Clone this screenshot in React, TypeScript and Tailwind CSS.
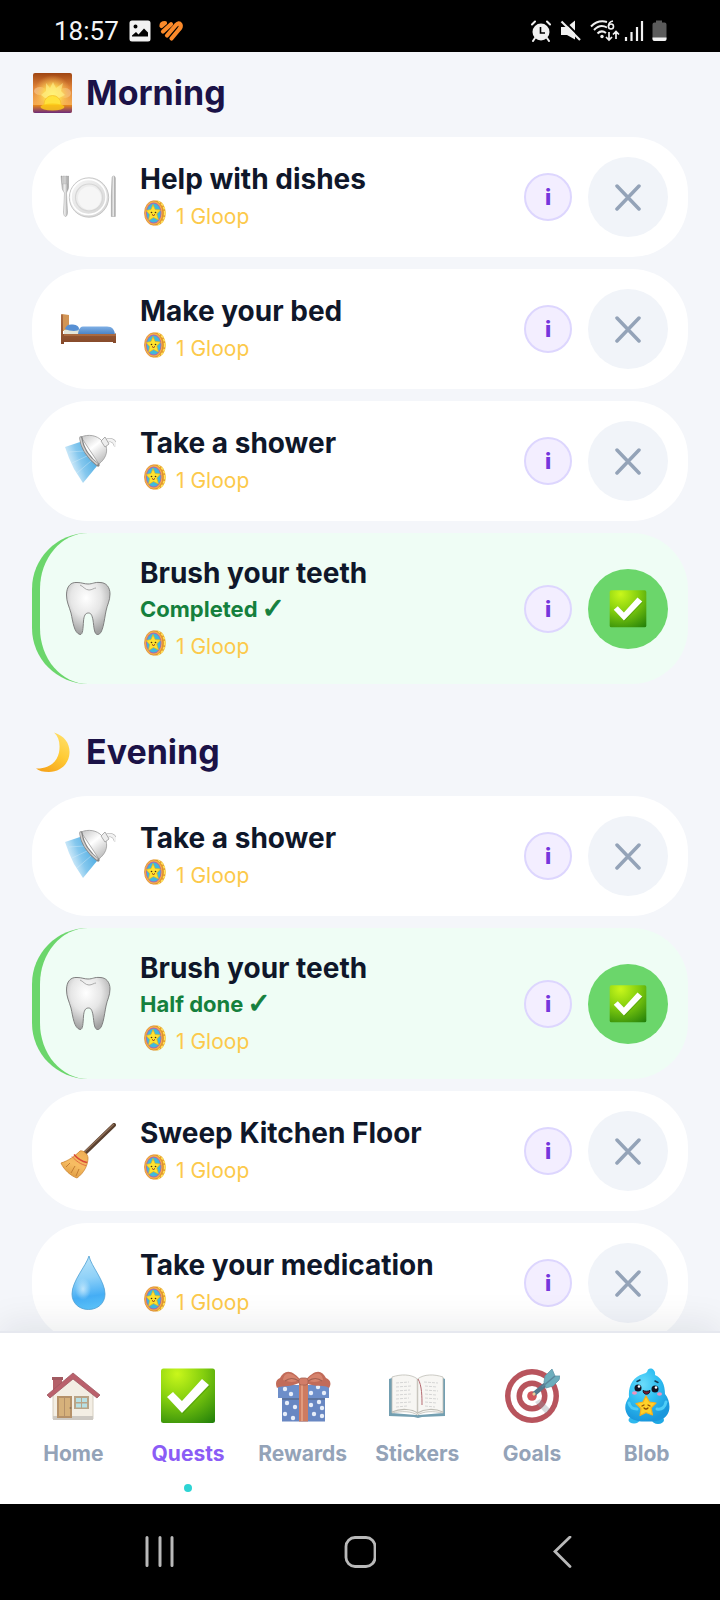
import type { ReactNode } from 'react';

type Quest = {
  title: string;
  icon: ReactNode;
  status?: string;
};

const SunriseIcon = () => (
  <svg viewBox="0 0 40 40" className="w-10 h-10 shrink-0">
    <defs>
      <linearGradient id="sky" x1="0" y1="0" x2="0" y2="1">
        <stop offset="0" stopColor="#9f4512" />
        <stop offset="0.35" stopColor="#dd8136" />
        <stop offset="0.75" stopColor="#f4a94f" />
      </linearGradient>
      <radialGradient id="sunGlow" cx="0.5" cy="0.55" r="0.5">
        <stop offset="0" stopColor="#ffee55" />
        <stop offset="0.45" stopColor="#fdd84f" stopOpacity="0.9" />
        <stop offset="1" stopColor="#f8b45a" stopOpacity="0" />
      </radialGradient>
      <linearGradient id="ground" x1="0" y1="0" x2="0" y2="1">
        <stop offset="0" stopColor="#ea8a17" />
        <stop offset="1" stopColor="#6b2a7c" />
      </linearGradient>
    </defs>
    <rect x="1" y="0" width="39" height="40" rx="2" fill="url(#sky)" />
    <ellipse cx="8" cy="18" rx="6" ry="4" fill="#fbd9b8" opacity="0.5" />
    <ellipse cx="33" cy="20" rx="6" ry="5" fill="#fbd9b8" opacity="0.45" />
    <rect x="1" y="0" width="39" height="40" fill="url(#sunGlow)" />
    <path d="M14 10l4 5 3-6 3 6 7-5-2 8 4 4-6 3H13l-4-3 5-4z" fill="#fff99b" opacity="0.5" />
    <circle cx="20.500" cy="31" r="8.500" fill="#ffe23c" stroke="#f6c02f" strokeWidth="0.8" />
    <path d="M1 32h39v6a2 2 0 0 1-2 2H3a2 2 0 0 1-2-2z" fill="url(#ground)" />
    <ellipse cx="20.500" cy="34" rx="12" ry="3.500" fill="#fbc817" opacity="0.85" />
  </svg>
);

const MoonIcon = () => (
  <svg viewBox="0 0 40 40" className="w-10 h-10 shrink-0">
    <defs>
      <linearGradient id="moon" x1="0.8" y1="0" x2="0.3" y2="1">
        <stop offset="0" stopColor="#ffdf6a" />
        <stop offset="0.5" stopColor="#ffcb35" />
        <stop offset="1" stopColor="#f6a51b" />
      </linearGradient>
    </defs>
    <path d="M22 0.500C33 4 38 12 37.500 21C37 32 28 40 17 40C11 40 7 39 4 36.500C17 37 25 30 27 20.500C28.500 12 27 5 22 0.500Z" fill="url(#moon)" />
  </svg>
);

const DishesIcon = () => (
  <svg viewBox="0 0 56 56" className="w-14 h-14 shrink-0">
    <defs>
      <linearGradient id="plate" x1="0" y1="0" x2="1" y2="1">
        <stop offset="0" stopColor="#f8f8f8" />
        <stop offset="1" stopColor="#d2d2d2" />
      </linearGradient>
      <linearGradient id="steel" x1="0" y1="0" x2="1" y2="0">
        <stop offset="0" stopColor="#a3a3a3" />
        <stop offset="0.5" stopColor="#efefef" />
        <stop offset="1" stopColor="#929292" />
      </linearGradient>
    </defs>
    <path d="M1 7h1.300v8h1V7h1.300v8h1V7h1.300v8h0.600V7h1v11c0 3-1.500 4-2 6l1 19c0 6-4 6-4 0l1-19c-1-2-2.500-3-2.500-6z" fill="url(#steel)" stroke="#8f8f8f" strokeWidth="0.4" />
    <circle cx="29" cy="28.500" r="19.700" fill="url(#plate)" stroke="#bdbdbd" strokeWidth="0.8" />
    <circle cx="28.500" cy="28" r="17.500" fill="none" stroke="#fff" strokeWidth="1.500" />
    <circle cx="29" cy="28.500" r="13.500" fill="#ededed" stroke="#d6d6d6" strokeWidth="1.200" />
    <circle cx="29.500" cy="29" r="11.500" fill="#f6f6f6" />
    <path d="M52 9c0-2.500 3-3 3.300 0v38.500h-4V27z" fill="url(#steel)" stroke="#8f8f8f" strokeWidth="0.4" />
  </svg>
);

const BedIcon = () => (
  <svg viewBox="0 0 56 56" className="w-14 h-14 shrink-0">
    <defs>
      <linearGradient id="wood" x1="0" y1="0" x2="0" y2="1">
        <stop offset="0" stopColor="#b06f43" />
        <stop offset="1" stopColor="#85492a" />
      </linearGradient>
      <linearGradient id="blanket" x1="0" y1="0" x2="0" y2="1">
        <stop offset="0" stopColor="#7fb0e6" />
        <stop offset="1" stopColor="#3f78bd" />
      </linearGradient>
    </defs>
    <path d="M2 13l7 1v16H2z" fill="#d29555" />
    <path d="M4 29l15-2v8H4z" fill="#e3e5d9" />
    <path d="M5 28c1-4 4-5 8-4.500s6 2 6 4.500-9 2.500-14 0z" fill="#5790d4" />
    <path d="M18 35c0-5 1-9 5-9.500h24c5 0 8 3 8 9.500z" fill="url(#blanket)" />
    <path d="M1 13l2 1v19h52l1-1v10h-3v-1H4v2H1z" fill="url(#wood)" />
    <path d="M4 34h52" stroke="#bf7e50" strokeWidth="1" />
  </svg>
);

const ShowerIcon = () => (
  <svg viewBox="0 0 56 56" className="w-14 h-14 shrink-0">
    <defs>
      <linearGradient id="water" x1="0.9" y1="0.3" x2="0.1" y2="0.7">
        <stop offset="0" stopColor="#4fade3" />
        <stop offset="0.5" stopColor="#86c8ee" />
        <stop offset="1" stopColor="#d9effb" stopOpacity="0.7" />
      </linearGradient>
      <linearGradient id="chrome" x1="0.2" y1="0" x2="0.9" y2="1">
        <stop offset="0" stopColor="#cfcfcf" />
        <stop offset="0.4" stopColor="#ffffff" />
        <stop offset="1" stopColor="#b3b3b3" />
      </linearGradient>
    </defs>
    <path d="M20 9L5 14l4 11 5 11 9 14 14-17z" fill="url(#water)" />
    <path d="M24 18L9 19M27 23L12 30M31 28L17 40" stroke="#e4f4fd" strokeWidth="1" opacity="0.35" />
    <path d="M45 9c4-3 9-3 11 4" fill="none" stroke="#aaa" strokeWidth="4" />
    <path d="M45 9c4-3 9-3 11 4" fill="none" stroke="#f2f2f2" strokeWidth="3" />
    <path d="M21 4c7-3 16-2 21 4l4 5c2 7-1 13-7 18z" fill="url(#chrome)" stroke="#9a9a9a" strokeWidth="0.8" />
    <path d="M41 8l4-4 4 7-4 3z" fill="#ededed" stroke="#999" strokeWidth="0.8" />
    <path d="M21 5C22 16 30 26 38 32" fill="none" stroke="#858585" strokeWidth="3.400" strokeLinecap="round" />
    <path d="M20.500 5C22 16 29 25 37 31" fill="none" stroke="#cfcfcf" strokeWidth="1.600" strokeLinecap="round" />
  </svg>
);

const ToothIcon = () => (
  <svg viewBox="0 0 56 56" className="w-14 h-14 shrink-0">
    <defs>
      <radialGradient id="enamel" cx="0.45" cy="0.3" r="0.7">
        <stop offset="0" stopColor="#ffffff" />
        <stop offset="0.5" stopColor="#e6e6e6" />
        <stop offset="1" stopColor="#a0a0a0" />
      </radialGradient>
    </defs>
    <path d="M6.500 14C6.500 5 11 1 17 1.500C22 1.500 24 3 28 3C33 3 34 1 40 1.500C46 1.500 50 6 50 13C50 20 47 24 46 30C44 40 43 53 38 53.500C34 54 34 46 33 39C32 34 31 32 28.500 32C25 32 24 35 23.500 40C23 47 23 54 20 53.500C14 52 13 41 11 32C9 25 6.500 21 6.500 14Z" fill="url(#enamel)" stroke="#808080" strokeWidth="1" />
    <path d="M20 4c3 1 5 5 9 5 3 0 5-2 7-2" fill="none" stroke="#aaa" strokeWidth="1" />
  </svg>
);

const BroomIcon = () => (
  <svg viewBox="0 0 56 56" className="w-14 h-14 shrink-0">
    <defs>
      <linearGradient id="straw" x1="0.7" y1="0" x2="0.3" y2="1">
        <stop offset="0" stopColor="#efaf55" />
        <stop offset="0.5" stopColor="#f7bd63" />
        <stop offset="1" stopColor="#dc983f" />
      </linearGradient>
    </defs>
    <path d="M54 2L25 30" stroke="#59402f" strokeWidth="4" strokeLinecap="round" />
    <path d="M53.500 1.500L25 28.500" stroke="#927159" strokeWidth="1.200" strokeLinecap="round" />
    <path d="M20 28C23 27 28 31 28 35C28 42 24 50 17 55C11 53 4 47 1 40C8 38 15 33 20 28Z" fill="url(#straw)" stroke="#cd8531" strokeWidth="0.800" />
    <path d="M10 40L6 44M15 43l-4 7M19 46l-3 7" stroke="#c47e33" strokeWidth="1" />
    <path d="M14 31.500C17 35 22 38.500 27 39.500" fill="none" stroke="#da4937" strokeWidth="1.600" />
    <path d="M12 33.500C16 38 21 41.500 26 42.500" fill="none" stroke="#e36c41" strokeWidth="1" />
  </svg>
);

const DropIcon = () => (
  <svg viewBox="0 0 56 56" className="w-14 h-14 shrink-0">
    <defs>
      <linearGradient id="drop" x1="0.5" y1="0" x2="0.6" y2="1">
        <stop offset="0" stopColor="#b8e3f9" />
        <stop offset="0.4" stopColor="#8fd1f8" />
        <stop offset="0.75" stopColor="#46aef5" />
        <stop offset="1" stopColor="#5bc4fb" />
      </linearGradient>
      <radialGradient id="dropShine">
        <stop offset="0" stopColor="#d3effd" stopOpacity="0.8" />
        <stop offset="1" stopColor="#d3effd" stopOpacity="0" />
      </radialGradient>
    </defs>
    <path d="M29 1C31 11 45 26 45 39C45 48 38 54.500 28.500 54.500S12 48 12 39C12 26 26 11 29 1Z" fill="url(#drop)" stroke="#4c9fd4" strokeWidth="0.8" />
    <ellipse cx="23" cy="34" rx="8" ry="11" fill="url(#dropShine)" />
  </svg>
);

const CheckEmoji = ({ className }: { className: string }) => (
  <svg viewBox="0 0 56 56" className={className}>
    <defs>
      <radialGradient id="checkBg" cx="0.3" cy="0.1" r="1.1">
        <stop offset="0" stopColor="#c9f71b" />
        <stop offset="0.45" stopColor="#83ce0e" />
        <stop offset="1" stopColor="#24820a" />
      </radialGradient>
    </defs>
    <rect x="1" y="0.500" width="54" height="54.500" rx="2.500" fill="url(#checkBg)" />
    <path d="M7 29l6-5 9 9 20-22 7 6-27 28z" fill="#2d7a05" opacity="0.35" transform="translate(1 1)" />
    <path d="M7 29l6-5 9 9 20-22 7 6-27 28z" fill="#fff" />
  </svg>
);

const HouseIcon = () => (
  <svg viewBox="0 0 56 56" className="w-14 h-14">
    <path d="M8 9h9v14H8z" fill="#9c2c38" />
    <path d="M7 9h11v3H7z" fill="#82232d" />
    <path d="M8 26L28 9l20 17v25H8z" fill="#f0e9dc" stroke="#bcae9a" strokeWidth="0.800" />
    <path d="M8 48h40v4H8z" fill="#bdb7b0" />
    <path d="M28 5L2 27l3 3 23-19 24 19 3-3z" fill="#a42c3b" stroke="#7d222d" strokeWidth="0.800" />
    <path d="M12 28h15v22H12z" fill="#9d6d38" />
    <path d="M14 30h5v18h-5zM20 30h5v18h-5z" fill="#c9974f" />
    <circle cx="25.500" cy="40" r="1" fill="#6a4724" />
    <path d="M29 28h15v13H29z" fill="#a2865f" />
    <path d="M31 30h5v4h-5zM37 30h5v4h-5zM31 35.500h5v4h-5zM37 35.500h5v4h-5z" fill="#a0d6dc" />
  </svg>
);

const GiftIcon = () => {
  const dots = [[10, 21], [16, 26], [36, 25], [43, 19], [49, 25], [12, 35], [20, 39], [10, 46], [18, 50], [36, 37], [44, 34], [39, 46], [47, 48], [47, 40]];
  return (
    <svg viewBox="0 0 56 56" className="w-14 h-14">
      <path d="M7 26h43v27.500H7z" fill="#365fae" />
      <path d="M3 17h51v13H3z" fill="#3d69b8" />
      <path d="M7 30h43v2H7z" fill="#264680" />
      {dots.map(([x, y]) => (
        <circle key={`${x}-${y}`} cx={x} cy={y} r="2.200" fill="#dfe9f8" />
      ))}
      <path d="M24 16h9v37.500h-9z" fill="#bd4f2b" />
      <path d="M26 17h2v36h-2z" fill="#d67a53" />
      <path d="M24 15C13 20 5 17 2 20c-2-5-1-8 3-10C9 2 17 0 27 14z" fill="#ad3a22" />
      <path d="M31 15c10 5 18 1 23 5 3-5 1-8-3-10C47 2 40 0 29 14z" fill="#ad3a22" />
      <path d="M24 12C16 3 9 4 8 12c5 2 11 3 16 0zM32 12c8-9 15-8 16 0-5 2-11 3-16 0z" fill="#c95a3d" />
      <path d="M10 13c5-4 9-3 14 0M47 13c-5-4-9-3-14 0" fill="none" stroke="#852d19" strokeWidth="1.200" />
      <rect x="24" y="10" width="9" height="7" rx="2.500" fill="#c45236" stroke="#852d19" strokeWidth="0.800" />
    </svg>
  );
};

const BookIcon = () => (
  <svg viewBox="0 0 56 56" className="w-14 h-14">
    <path d="M0 11l3-1v35l24 2 3 0 24-2V10l2 1v37l-23 1-4 1-4-1-25-1z" fill="#457f98" />
    <path d="M3 9C12 6 22 6 28.500 11C35 6 45 6 54 9v36c-10-2-19-2-25.500 2C22 43 13 43 3 45z" fill="#f5f4f0" stroke="#aaa89e" strokeWidth="0.800" />
    <path d="M3 44c9-4 20-3 25.500 1C35 41 45 40 54 44" fill="none" stroke="#aaa89e" strokeWidth="1.200" />
    <path d="M28.500 11v35" stroke="#b8b5aa" strokeWidth="1.500" />
    <path d="M7 15l13-1M7 19l15-1M7 23l14-1M7 27l15-1M7 31l13-1M7 35l15-1M7 39l11-1M35 14l14 1M36 18l12 1M36 22l13 1M36 26l11 1M36 30l13 1M36 34l12 1M36 38l10 1" stroke="#c2c2c2" strokeWidth="0.900" strokeDasharray="3 1" />
    <path d="M29 11c4 6 4 19 4 26" fill="none" stroke="#9c3942" strokeWidth="1" />
  </svg>
);

const TargetIcon = () => (
  <svg viewBox="0 0 56 56" className="w-14 h-14">
    <circle cx="28" cy="28" r="27" fill="#a11c28" />
    <circle cx="28" cy="28" r="21.500" fill="#fff" />
    <circle cx="28" cy="28" r="15.500" fill="#a11c28" />
    <circle cx="28" cy="28" r="10" fill="#fff" />
    <circle cx="28" cy="28" r="4.800" fill="#c41f26" />
    <path d="M31 34l11 12 4-5-10-10z" fill="#6b7680" opacity="0.35" />
    <path d="M30 26L48 11" stroke="#1d4b67" strokeWidth="4.500" />
    <path d="M29 27l2-2" stroke="#e4bb75" strokeWidth="2.500" />
    <path d="M40 14l1-6 7-7 3 7 5 0-1 4-6 6-7 2z" fill="#3d93a8" stroke="#2c748b" strokeWidth="0.800" />
    <path d="M38 19l13-11" stroke="#265f7b" strokeWidth="1.500" />
  </svg>
);

const BlobIcon = () => (
  <svg viewBox="0 0 56 56" className="w-14 h-14">
    <defs>
      <radialGradient id="blob" cx="0.4" cy="0.3" r="0.7">
        <stop offset="0" stopColor="#6bdcfb" />
        <stop offset="0.5" stopColor="#2fbff2" />
        <stop offset="1" stopColor="#1a97dc" />
      </radialGradient>
    </defs>
    <ellipse cx="15" cy="52" rx="5.500" ry="3.500" fill="#2eb8ee" />
    <ellipse cx="39" cy="52" rx="6" ry="4" fill="#1fa8e4" />
    <path d="M29 1.500C32-1 37 2 36 7C43 10 46 17 46 26C51 32 52 42 48 47C44 53 35 54 28 53.500C19 54 11 52 8 46C5 40 6 35 10 29C9 18 14 9 24 6C28 5 28 4 29 1.500Z" fill="url(#blob)" />
    <circle cx="19" cy="20" r="3.500" fill="#101423" />
    <circle cx="36" cy="21" r="3.500" fill="#101423" />
    <circle cx="20" cy="18.500" r="1.300" fill="#fff" />
    <circle cx="37" cy="19.500" r="1.300" fill="#fff" />
    <path d="M18 13.500l3-1.500M36 13l3 1.500" stroke="#123a55" strokeWidth="1.500" strokeLinecap="round" />
    <path d="M24 22.500c2 1 5 1 7 0 0 5-7 5-7 0z" fill="#781c2e" stroke="#171827" strokeWidth="1" />
    <ellipse cx="15.500" cy="25" rx="2.500" ry="1.700" fill="#f091bd" />
    <ellipse cx="40.500" cy="26" rx="2.500" ry="1.700" fill="#f091bd" />
    <path d="M27 28l3.500 6 6.500 1-5 5 1.500 7-6.500-2.500-6 3 1-7-5-5 7-1.500z" fill="#ffd228" stroke="#f7b01e" strokeWidth="1.200" strokeLinejoin="round" />
    <path d="M23 38l2-1M29 37l2 1M25 40q2 2 4 0" fill="none" stroke="#8b4a08" strokeWidth="1.200" strokeLinecap="round" />
    <path d="M10 35c1 4 4 6 8 6M47 34c-1 5-4 8-9 7" fill="none" stroke="#4fcdf7" strokeWidth="3" strokeLinecap="round" />
  </svg>
);

const CoinIcon = () => (
  <svg viewBox="0 0 22 26" className="w-[22px] h-[26px] mb-2 shrink-0">
    <ellipse cx="12.500" cy="13" rx="9.300" ry="12.500" fill="#e6a02a" />
    <ellipse cx="12.500" cy="13" rx="8.300" ry="11.500" fill="none" stroke="#ffe25c" strokeWidth="1.800" strokeDasharray="2.500 1.500" />
    <ellipse cx="9.700" cy="13" rx="9.200" ry="12.200" fill="#f6b447" stroke="#d9822f" strokeWidth="0.700" />
    <ellipse cx="9.700" cy="13" rx="7.800" ry="10.600" fill="#b565a8" />
    <ellipse cx="9.700" cy="13" rx="6.900" ry="9.600" fill="#3fb9dc" />
    <path d="M9 4.500l2.200 5 5.300 0.500-3.700 4 1.700 6-5-2.500-5 3 1.200-6L2 10.500l5-1z" fill="#ffe32e" stroke="#e3b220" strokeWidth="0.700" strokeLinejoin="round" />
    <circle cx="7.500" cy="12.500" r="0.800" fill="#463012" />
    <circle cx="11.500" cy="12.500" r="0.800" fill="#463012" />
    <path d="M8 14.500q1.500 2 3 0" fill="none" stroke="#8a2b20" strokeWidth="1" />
  </svg>
);

const StatusBar = () => (
  <div className="flex items-center justify-between shrink-0 h-[52px] pt-[10px] pl-[54px] pr-[53px] bg-black text-gray-100">
    <div className="flex items-center">
      <span className="font-[Roboto,sans-serif] text-[26px] leading-8">18:57</span>
      <svg viewBox="0 0 22 22" className="w-[22px] h-[22px] ml-[10px]">
        <path fillRule="evenodd" d="M3 0.500h16a2.500 2.500 0 0 1 2.500 2.500v16a2.500 2.500 0 0 1-2.500 2.500H3A2.500 2.500 0 0 1 0.500 19V3A2.500 2.500 0 0 1 3 0.500zM6.500 4.500a2 2 0 1 0 0 4 2 2 0 0 0 0-4zM3 16.500h16v-4l-4-4-5.500 6-2.500-2.500-4 3.500z" fill="#f1f1f1" />
      </svg>
      <svg viewBox="0 0 26 22" className="w-[26px] h-[22px] ml-[7px]">
        <g stroke="#fb8a2a" strokeLinecap="round" strokeLinejoin="round" fill="none">
          <path d="M3.500 6Q3.500 3 7 3z" strokeWidth="4.200" fill="#fb8a2a" />
          <path d="M5 11.500L13 4.200" strokeWidth="4.200" />
          <path d="M9 15.500L18 5Q21 2 22.500 4.500Q23.500 7 21 9.500L13.500 18.500" strokeWidth="4.200" />
        </g>
      </svg>
    </div>
    <div className="flex items-center">
      <svg viewBox="0 0 22 22" className="w-[22px] h-[22px]">
        <circle cx="11" cy="12" r="8.500" fill="#f1f1f1" />
        <path d="M2 4.500l3-3M20 4.500l-3-3M5 18l-2 3M17 18l2 3" stroke="#f1f1f1" strokeWidth="2" strokeLinecap="round" />
        <path d="M10.500 7V13H15" fill="none" stroke="#000" strokeWidth="1.600" />
      </svg>
      <svg viewBox="0 0 22 22" className="w-[22px] h-[22px] ml-2">
        <path d="M1 7h6l8-6.500v19L7 15H1z" fill="#f1f1f1" />
        <path d="M3 0l19 19" stroke="#000" strokeWidth="2" />
        <path d="M1.500 1.500L20 20" stroke="#f1f1f1" strokeWidth="2.200" />
      </svg>
      <svg viewBox="0 0 30 22" className="w-[30px] h-[22px] ml-2">
        <g fill="none" stroke="#f1f1f1" strokeWidth="2">
          <path d="M1 6.500Q8-0.500 17 2M4 10Q10 3.500 17 7.500M7.500 13.500Q11.500 9.500 16 13" />
          <path d="M23 1Q18.500 2 18.500 6" strokeWidth="1.600" />
          <circle cx="21" cy="6.500" r="2.500" strokeWidth="1.600" />
          <path d="M19 12v8M16 17l3 3 3-3M26 19v-7M23 14.500l3-3 3 3" strokeWidth="1.700" />
        </g>
        <circle cx="12" cy="16.500" r="1.700" fill="#f1f1f1" />
      </svg>
      <svg viewBox="0 0 20 22" className="w-5 h-[22px] ml-1">
        <path d="M2 21v-4M7.500 21V12M13 21V7M18 21V1" stroke="#f1f1f1" strokeWidth="2.200" />
      </svg>
      <svg viewBox="0 0 15 22" className="w-[15px] h-[22px] ml-2">
        <path d="M4 0.500h6v2h2.500a2 2 0 0 1 2 2V19a2 2 0 0 1-2 2h-10a2 2 0 0 1-2-2V4.500a2 2 0 0 1 2-2H4z" fill="#5b5b5b" />
        <path d="M0.500 17.500h14V19a2 2 0 0 1-2 2h-10a2 2 0 0 1-2-2z" fill="#f1f1f1" />
      </svg>
    </div>
  </div>
);

const QuestCard = ({ title, icon, status }: Quest) => (
  <li className={`flex items-center rounded-[56px] pr-5 ${status ? 'bg-[#effdf5] border-l-8 border-[#6bd66b] pl-5 pt-[22px] pb-[21px]' : 'bg-white pl-7 py-5'}`}>
    {icon}
    <div className="flex-1 min-w-0 ml-6">
      <h3 className="text-[28px] leading-9 font-bold text-[#0f172a]">{title}</h3>
      {status && (
        <p className="flex items-center gap-1 h-9 text-[22px] font-bold text-[#15803d]">
          {status}
          <span className="font-['DejaVu_Sans',sans-serif] text-[28px] leading-9 [-webkit-text-stroke:1px]">✓</span>
        </p>
      )}
      <p className="flex items-center gap-[10px] pl-1 pt-1 h-9 text-[21px] text-[#fcc94b]">
        <CoinIcon />
        1 Gloop
      </p>
    </div>
    <button aria-label={`About ${title}`} className="w-12 h-12 shrink-0 rounded-full border-2 border-[#ddd6fe] bg-[#f3eeff] text-[#7536dc] text-[22px] font-extrabold">
      i
    </button>
    <button aria-label={`Toggle ${title}`} className={`flex items-center justify-center w-20 h-20 shrink-0 ml-4 rounded-full ${status ? 'bg-[#6bd66b]' : 'bg-[#f1f4f9]'}`}>
      {status ? (
        <CheckEmoji className="w-[38px] h-[38px]" />
      ) : (
        <svg viewBox="0 0 28 28" className="w-7 h-7">
          <path d="M3 3l22 23M25 3L3 26" stroke="#94a3b8" strokeWidth="3.500" strokeLinecap="round" />
        </svg>
      )}
    </button>
  </li>
);

const App = () => {
  const sections = [
    {
      name: 'Morning',
      icon: <SunriseIcon />,
      quests: [
        { title: 'Help with dishes', icon: <DishesIcon /> },
        { title: 'Make your bed', icon: <BedIcon /> },
        { title: 'Take a shower', icon: <ShowerIcon /> },
        { title: 'Brush your teeth', icon: <ToothIcon />, status: 'Completed' },
      ],
    },
    {
      name: 'Evening',
      icon: <MoonIcon />,
      quests: [
        { title: 'Take a shower', icon: <ShowerIcon /> },
        { title: 'Brush your teeth', icon: <ToothIcon />, status: 'Half done' },
        { title: 'Sweep Kitchen Floor', icon: <BroomIcon /> },
        { title: 'Take your medication', icon: <DropIcon /> },
      ],
    },
  ];

  const tabs = [
    { label: 'Home', icon: <HouseIcon /> },
    { label: 'Quests', icon: <CheckEmoji className="w-14 h-14" />, active: true },
    { label: 'Rewards', icon: <GiftIcon /> },
    { label: 'Stickers', icon: <BookIcon /> },
    { label: 'Goals', icon: <TargetIcon /> },
    { label: 'Blob', icon: <BlobIcon />, solid: true },
  ];

  return (
    <div className="flex flex-col h-screen overflow-hidden bg-[#f4f6fa] font-[Inter,sans-serif]">
      <StatusBar />

      <main className="flex-1 min-h-0 overflow-hidden px-8 pt-[21px]">
        <div className="flex flex-col gap-12">
          {sections.map((section) => (
            <section key={section.name}>
              <h2 className="flex items-center gap-[14px] mb-6 text-[34px] leading-10 font-bold text-[#1b1247]">
                {section.icon}
                {section.name}
              </h2>
              <ul className="flex flex-col gap-3">
                {section.quests.map((quest) => (
                  <QuestCard key={quest.title} {...quest} />
                ))}
              </ul>
            </section>
          ))}
        </div>
      </main>

      {/* Bottom tabs */}
      <nav className="relative flex shrink-0 px-4 pt-[35px] pb-3 bg-white border-t-2 border-[#e6e8ef] shadow-[0_-8px_32px_rgba(15,23,42,0.08)]">
        {tabs.map((tab) => (
          <a key={tab.label} href={`#${tab.label.toLowerCase()}`} className="flex flex-1 flex-col items-center">
            <span className={tab.active || tab.solid ? '' : 'opacity-75'}>{tab.icon}</span>
            <span className={`mt-4 text-[21px] leading-7 font-bold ${tab.active ? 'text-[#8b5cf6]' : 'text-[#94a3b8]'}`}>{tab.label}</span>
            <span className={`w-2 h-2 mt-4 rounded-full ${tab.active ? 'bg-[#2dd4d4]' : ''}`}></span>
          </a>
        ))}
      </nav>

      {/* System navigation */}
      <div className="flex items-center justify-around shrink-0 h-24 px-[58px] bg-black">
        <button aria-label="Recent apps">
          <svg viewBox="0 0 32 32" className="w-8 h-8">
            <path d="M4 1.500v28M17 1.500v28M29 1.500v28" stroke="#b9b9b9" strokeWidth="3" strokeLinecap="round" />
          </svg>
        </button>
        <button aria-label="Home screen">
          <svg viewBox="0 0 32 32" className="w-8 h-8">
            <rect x="2" y="1.500" width="29" height="29" rx="9" fill="none" stroke="#b9b9b9" strokeWidth="2.800" />
          </svg>
        </button>
        <button aria-label="Back">
          <svg viewBox="0 0 32 32" className="w-8 h-8">
            <path d="M25 1L10 15.500l15 15" fill="none" stroke="#b9b9b9" strokeWidth="2.800" strokeLinecap="round" />
          </svg>
        </button>
      </div>
    </div>
  );
};

export default App;
